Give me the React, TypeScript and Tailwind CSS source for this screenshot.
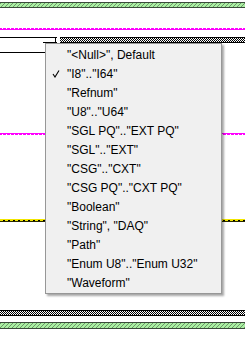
const items = [
  '"<Null>", Default',
  '"I8".."I64"',
  '"Refnum"',
  '"U8".."U64"',
  '"SGL PQ".."EXT PQ"',
  '"SGL".."EXT"',
  '"CSG".."CXT"',
  '"CSG PQ".."CXT PQ"',
  '"Boolean"',
  '"String", "DAQ"',
  '"Path"',
  '"Enum U8".."Enum U32"',
  '"Waveform"',
];

function Wires() {
  return (
    <svg width="245" height="343" className="block" shapeRendering="crispEdges">
      <defs>
        <pattern id="hatch" width="4" height="4" patternUnits="userSpaceOnUse">
          <rect width="4" height="4" fill="#aaf0a2" />
          <path d="M0 4 L4 0" stroke="#6c946a" strokeWidth="1" shapeRendering="auto" />
        </pattern>
        <pattern id="checker" width="2" height="2" patternUnits="userSpaceOnUse">
          <rect width="2" height="2" fill="#fff" />
          <rect width="1" height="1" fill="#000" />
          <rect x="1" y="1" width="1" height="1" fill="#000" />
        </pattern>
        <pattern id="wave" width="4" height="2" patternUnits="userSpaceOnUse">
          <rect width="2" height="1" fill="#ff00ff" />
          <rect y="1" width="4" height="1" fill="#ff00ff" />
          <rect x="3" y="0" width="1" height="1" fill="#ff00ff" />
        </pattern>
        <pattern id="dash" width="5" height="1" patternUnits="userSpaceOnUse">
          <rect width="5" height="1" fill="#f2e600" />
          <rect x="3" width="2" height="1" fill="#000" />
        </pattern>
      </defs>

      {/* top green wire */}
      <rect x="0" y="2" width="245" height="1" fill="#3a4a3a" />
      <rect x="0" y="3" width="245" height="4" fill="url(#hatch)" />
      <rect x="0" y="7" width="245" height="1" fill="#3a4a3a" />

      {/* magenta wires */}
      <rect x="0" y="28" width="245" height="2" fill="url(#wave)" />
      <rect x="0" y="133" width="245" height="2" fill="url(#wave)" />

      {/* bundle lines */}
      <rect x="0" y="37" width="57" height="1" fill="#000" />
      <rect x="55" y="37" width="1" height="7" fill="#000" />
      <rect x="43" y="42" width="14" height="1" fill="#000" />
      <rect x="0" y="52" width="46" height="1" fill="#000" />
      <rect x="60" y="37" width="185" height="1" fill="#000" />
      <rect x="60" y="38" width="185" height="4" fill="url(#checker)" />
      <rect x="60" y="42" width="185" height="1" fill="#000" />

      {/* yellow wire */}
      <rect x="0" y="219" width="245" height="1" fill="#f2e600" />
      <rect x="0" y="220" width="245" height="1" fill="url(#dash)" />
      <rect x="0" y="221" width="245" height="1" fill="#2a2a00" />

      {/* bottom checker wire */}
      <rect x="0" y="310" width="245" height="1" fill="#000" />
      <rect x="0" y="311" width="245" height="4" fill="url(#checker)" />
      <rect x="0" y="315" width="245" height="1" fill="#000" />

      {/* bottom green wire */}
      <rect x="0" y="322" width="245" height="1" fill="#3a4a3a" />
      <rect x="0" y="323" width="245" height="5" fill="url(#hatch)" />
      <rect x="0" y="328" width="245" height="1" fill="#3a4a3a" />
    </svg>
  );
}

export default function App() {
  return (
    <div className="relative w-[245px] h-[343px] bg-white overflow-hidden">
      <Wires />

      <div
        className="absolute left-[45px] top-[43px] w-[177px] h-[251px] bg-[#f0f0f0] border border-[#979797] shadow-[2px_2px_2px_rgba(0,0,0,0.35)] pt-[1px]"
        style={{ fontFamily: '"Segoe UI", "Liberation Sans", Arial, sans-serif' }}
      >
        {items.map((label, i) => (
          <div key={label} className="relative h-[19px] flex items-center pl-[21px] text-[12px] text-black whitespace-nowrap">
            {i === 1 && (
              <svg width="8" height="8" viewBox="0 0 8 8" className="absolute left-[6px] top-[6px]">
                <path d="M1 4 L3 7 L7 0.5" stroke="#000" strokeWidth="1.1" fill="none" />
              </svg>
            )}
            {label}
          </div>
        ))}
      </div>
    </div>
  );
}
